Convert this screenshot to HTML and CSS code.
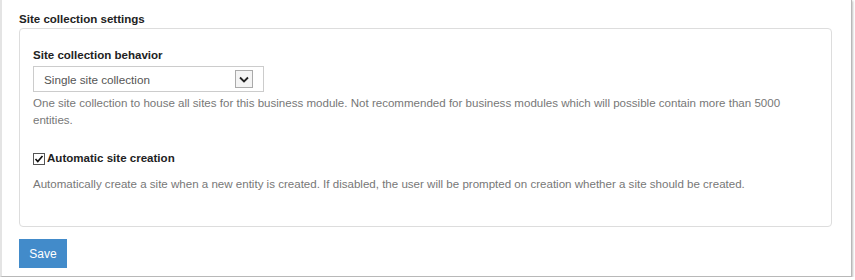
FILE: index.html
```html
<!DOCTYPE html>
<html lang="en">
<head>
    <meta charset="UTF-8">
    <title>Site collection settings</title>
    <link rel="stylesheet" href="styles.css">
</head>
<body>
    <div class="page">
        <h2 class="section-title">Site collection settings</h2>

        <div class="panel">
            <div class="form-group">
                <label class="field-label">Site collection behavior</label>
                <div class="select">
                    <span class="select-value">Single site collection</span>
                    <span class="select-button">
                        <svg width="10" height="7" viewBox="0 0 10 7">
                            <path d="M1 1.5 L5 5.5 L9 1.5" fill="none" stroke="#222" stroke-width="1.8"/>
                        </svg>
                    </span>
                </div>
                <p class="help-text">One site collection to house all sites for this business module. Not recommended for business modules which will possible contain more than 5000 entities.</p>
            </div>

            <div class="form-group checkbox-group">
                <label class="checkbox-label">
                    <svg class="checkbox" width="12" height="12" viewBox="0 0 12 12">
                        <rect x="0.5" y="0.5" width="11" height="11" fill="#fff" stroke="#555"/>
                        <path d="M2.5 6 L4.8 8.5 L9.5 3" fill="none" stroke="#111" stroke-width="1.7"/>
                    </svg>
                    Automatic site creation
                </label>
                <p class="help-text">Automatically create a site when a new entity is created. If disabled, the user will be prompted on creation whether a site should be created.</p>
            </div>
        </div>

        <button type="button" class="button">Save</button>
    </div>
</body>
</html>
```

FILE: styles.css
```css
body {
    margin: 0;
    font-family: "Liberation Sans", Arial, sans-serif;
    font-size: 11.55px;
    color: #333;
    background: white;
}
.page {
    box-sizing: border-box;
    width: 852px;
    height: 277px;
    padding: 11px 0 0 17px;
    border-left: 2px solid #e4e4e4;
    border-right: 1px solid #b8b8b8;
    border-bottom: 1px solid #b8b8b8;
    box-shadow: 1px 1px 2px rgba(0,0,0,0.25);
}
.section-title {
    margin: 0;
    font-size: 11.55px;
    font-weight: bold;
    line-height: 17px;
    color: #222;
}
.panel {
    box-sizing: border-box;
    width: 813px;
    height: 199px;
    padding: 18px 13px;
    border: 1px solid #ddd;
    border-radius: 4px;
}
.field-label {
    display: block;
    margin-bottom: 2px;
    font-weight: bold;
    line-height: 17px;
    color: #222;
}
.select {
    box-sizing: border-box;
    width: 231px;
    height: 26px;
    display: flex;
    align-items: center;
    justify-content: space-between;
    padding: 0 10px;
    border: 1px solid #ccc;
    font-size: 11.7px;
    color: #555;
}
.select-button {
    box-sizing: border-box;
    width: 18px;
    height: 18px;
    display: flex;
    align-items: center;
    justify-content: center;
    border: 1px solid #aaa;
    background: #f4f4f4;
}
.help-text {
    margin: 3px 0 0 0;
    line-height: 17px;
    color: #777;
}
.checkbox-group {
    margin-top: 21px;
}
.checkbox-label {
    display: flex;
    align-items: center;
    gap: 2px;
    font-weight: bold;
    line-height: 17px;
    color: #222;
}
.checkbox-group .help-text {
    margin-top: 9px;
}
.button {
    margin-top: 12px;
    width: 48px;
    height: 29px;
    padding: 0;
    border: none;
    background-color: #428bca;
    color: white;
    font-family: "Liberation Sans", Arial, sans-serif;
    font-size: 12px;
}
```
